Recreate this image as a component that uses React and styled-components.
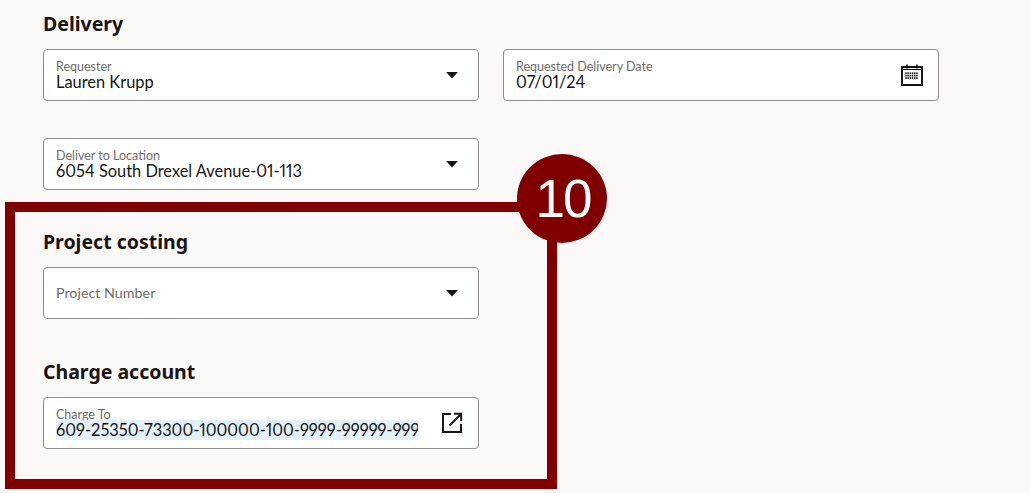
import styled, { createGlobalStyle } from "styled-components";

const GlobalStyle = createGlobalStyle`
    html, body {
        margin: 0;
        height: 100%;
        overflow: hidden;
        background: #fbf9f8;
        font-family: "Lato", "Noto Sans", sans-serif;
    }
`;

function CaretIcon() {
    return (
        <svg width="14" height="8" viewBox="0 0 14 8">
            <path d="M1 1h12L7 7.5z" fill="#161513" />
        </svg>
    );
}

function CalendarIcon() {
    const dots = [];
    for (let r = 0; r < 3; r++) {
        for (let c = 0; c < 6; c++) {
            dots.push(<rect key={`${r}-${c}`} x={5.2 + c * 2.2} y={9.4 + r * 2.4} width="1.5" height="1.7" fill="#161513" />);
        }
    }
    return (
        <svg width="24" height="24" viewBox="0 0 24 24" fill="none">
            <rect x="2" y="4" width="20" height="18" stroke="#161513" strokeWidth="2" />
            <path d="M2 6.5h20" stroke="#161513" strokeWidth="1" />
            <path d="M7 1.5v4M17 1.5v4" stroke="#161513" strokeWidth="1.6" />
            {dots}
        </svg>
    );
}

function OpenIcon() {
    return (
        <svg width="24" height="24" viewBox="0 0 24 24" fill="none">
            <path d="M11 3H3v18h18v-8" stroke="#161513" strokeWidth="2" />
            <path d="M9.5 14.5L20.5 3.5M14 2.8h7.2V10" stroke="#161513" strokeWidth="2" />
        </svg>
    );
}

function Field({ label, value, icon, selected }) {
    return (
        <FieldBox>
            <FieldText>
                {label && <FieldLabel $alone={!value}>{label}</FieldLabel>}
                {value && <FieldValue $selected={selected}>{value}</FieldValue>}
            </FieldText>
            <IconSlot>{icon}</IconSlot>
        </FieldBox>
    );
}

export default function App() {
    return (
        <Page>
            <GlobalStyle />
            <Heading>Delivery</Heading>
            <TwoColumns>
                <Field label="Requester" value="Lauren Krupp" icon={<CaretIcon />} />
                <Field label="Requested Delivery Date" value="07/01/24" icon={<CalendarIcon />} />
                <Field label="Deliver to Location" value="6054 South Drexel Avenue-01-113" icon={<CaretIcon />} />
            </TwoColumns>
            <ProjectHeading>Project costing</ProjectHeading>
            <SingleColumn>
                <Field label="Project Number" icon={<CaretIcon />} />
            </SingleColumn>
            <ChargeHeading>Charge account</ChargeHeading>
            <SingleColumn>
                <Field
                    label="Charge To"
                    value="609-25350-73300-100000-100-9999-99999-9999-0000"
                    icon={<OpenIcon />}
                    selected
                />
            </SingleColumn>
            <Highlight />
            <Badge>10</Badge>
        </Page>
    );
}

const Page = styled.div`
    position: relative;
    width: 1030px;
    height: 493px;
    box-sizing: border-box;
    padding: 10px 0 0 43px;
    overflow: hidden;
    color: #161513;
`;

const Heading = styled.h2`
    margin: 0;
    height: 28px;
    font-family: "Noto Sans", sans-serif;
    font-size: 19.5px;
    line-height: 28px;
    font-weight: 700;
    color: #161513;
`;

const ProjectHeading = styled(Heading)`
    margin-top: 38px;
`;

const ChargeHeading = styled(Heading)`
    margin-top: 39px;
`;

const TwoColumns = styled.div`
    display: grid;
    grid-template-columns: 436px 436px;
    column-gap: 24px;
    row-gap: 37px;
    margin-top: 11px;
`;

const SingleColumn = styled.div`
    width: 436px;
    margin-top: 11px;
`;

const FieldBox = styled.div`
    display: flex;
    align-items: center;
    height: 52px;
    box-sizing: border-box;
    padding: 0 14px 0 12px;
    background: #fff;
    border: 1px solid #8f8c89;
    border-radius: 4px;
`;

const FieldText = styled.div`
    flex: 1;
    min-width: 0;
    display: flex;
    flex-direction: column;
`;

const FieldLabel = styled.span`
    font-size: ${(p) => (p.$alone ? "14.3px" : "12.5px")};
    height: ${(p) => (p.$alone ? "18px" : "14px")};
    line-height: 18px;
    color: #6f6b67;
`;

const FieldValue = styled.span`
    font-size: 16.4px;
    line-height: 20px;
    font-variant-numeric: proportional-nums;
    white-space: nowrap;
    overflow: hidden;
    width: ${(p) => (p.$selected ? "362px" : "auto")};
    background: ${(p) => (p.$selected ? "#e4f0f8" : "transparent")};
    color: #161513;
`;

const IconSlot = styled.div`
    display: flex;
    align-items: center;
    justify-content: center;
    width: 24px;
    height: 24px;
    margin-left: 10px;
`;

const Highlight = styled.div`
    position: absolute;
    left: 5px;
    top: 202px;
    width: 552px;
    height: 287px;
    box-sizing: border-box;
    border: 10px solid #800000;
    pointer-events: none;
`;

const Badge = styled.div`
    position: absolute;
    left: 517px;
    top: 154px;
    width: 90px;
    height: 89px;
    padding-left: 2px;
    box-sizing: border-box;
    border-radius: 50%;
    background: #800000;
    color: #fff;
    display: flex;
    align-items: center;
    justify-content: center;
    font-family: "Liberation Sans", Arial, sans-serif;
    font-size: 53px;
    letter-spacing: -2px;
    line-height: 1;
`;
